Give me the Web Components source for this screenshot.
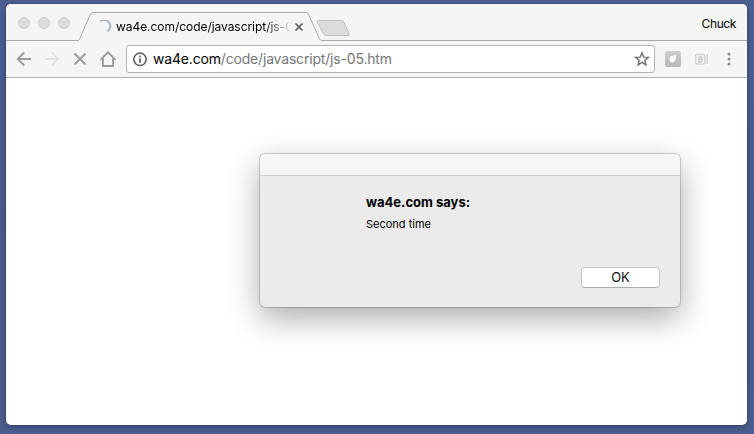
<!DOCTYPE html>
<html lang="en">
<head>
<meta charset="utf-8">
<title>wa4e.com/code/javascript/js-05.htm</title>
<style>
html,body{margin:0;width:754px;height:434px;overflow:hidden}
body{background:linear-gradient(#4c6093,#4b5b8e 50%,#4c5d8f);font-family:Inter,"Liberation Sans",sans-serif;color:#000}
</style>
</head>
<body>
<browser-window>
  <tab-strip slot="tabs" user="Chuck"><browser-tab>wa4e.com/code/javascript/js-05.htm</browser-tab></tab-strip>
  <tool-bar slot="tools"><address-box host="wa4e.com">/code/javascript/js-05.htm</address-box></tool-bar>
  <alert-dialog><span slot="title">wa4e.com says:</span><span slot="message">Second time</span><push-button slot="action">OK</push-button></alert-dialog>
</browser-window>
<script>
function define(name, html) {
  customElements.define(name, class extends HTMLElement {
    constructor() {
      super();
      const t = document.createElement('template');
      t.innerHTML = html;
      this.attachShadow({mode: 'open'}).append(t.content.cloneNode(true));
    }
    connectedCallback() {
      this.shadowRoot.querySelectorAll('[data-attr]').forEach(e => {
        e.textContent = this.getAttribute(e.dataset.attr);
      });
    }
  });
}
define('browser-window', `<style>
:host{display:block;box-sizing:border-box;width:754px;height:434px;padding:4px 7px 9px 6px}
.frame{display:flex;flex-direction:column;height:421px;background:#fff;border-radius:5px;overflow:hidden;box-shadow:0 0 1px 1px #00000018,0 2px 7px #0004}
.page{flex:1;padding:76px 0 0 254px}
</style><div class="frame"><slot name="tabs"></slot><slot name="tools"></slot><div class="page"><slot></slot></div></div>`);
define('tab-strip', `<style>
:host{display:flex;height:37px;background:linear-gradient(#a9a9a9,#a9a9a9) 0 36px/100% 1px no-repeat #f5f5f5}
.lights{display:flex;gap:8px;padding:13px 0 0 12px;width:60px}
.lights i{width:12px;height:12px;box-sizing:border-box;border-radius:50%;background:#dcdcdc;border:1px solid #cfcfcf}
.new{width:36px;height:37px;margin-left:-7px}
.user{margin-left:auto;padding:12px 11px 0 0;font-size:12px;line-height:15px;letter-spacing:-.4px}
</style><div class="lights"><i></i><i></i><i></i></div><slot></slot>
<svg class="new" viewBox="0 0 36 37"><path d="M4 16.500H26Q28 16.500 28.800 18L34 29.500Q35 31.500 33 31.500H11.500Q9.500 31.500 8.700 30L2.500 18.500Q1.500 16.500 4 16.500Z" fill="#dcdcdc" stroke="#bdbdbd"/></svg>
<div class="user" data-attr="user"></div>`);
define('browser-tab', `<style>
:host{display:grid;width:244px;height:37px;grid-template:37px/244px}
.shape,.row{grid-area:1/1}
.shape{width:244px;height:37px}
.row{display:flex;padding:13px 0 0 20px}
.spin{width:14px;height:14px;margin:3px 4px 0 0}
.label{width:173px;overflow:hidden;white-space:nowrap;font-size:12px;line-height:20px;letter-spacing:-.05px;-webkit-mask-image:linear-gradient(90deg,#000 148px,transparent 176px)}
.close{width:10px;height:10px;margin:5px 0 0 5px}
</style>
<svg class="shape" viewBox="0 0 244 37"><path d="M0 37V36.500Q1 36 1.500 35L12.500 10Q13.500 8.500 15 8.500H228Q229.500 8.500 230.500 10L241 35Q242 36.500 244 36.500V37Z" fill="#f5f5f5"/><path d="M0 36.500Q.8 36.500 1.300 35.500L12.500 10Q13.200 8.500 15 8.500H228Q229.800 8.500 230.500 10L241.500 35Q242.300 36.500 244 36.500" fill="none" stroke="#a9a9a9"/></svg>
<div class="row"><svg class="spin" viewBox="0 0 14 14"><path d="M2.300 1A6.300 6.300 0 0 1 9.500 11.500" fill="none" stroke="#b0b8cc" stroke-width="2.200"/></svg><div class="label"><slot></slot></div><svg class="close" viewBox="0 0 10 10"><path d="M1.500 1.500l7 7m0-7l-7 7" stroke="#5b5b5b" stroke-width="1.700"/></svg></div>`);
define('tool-bar', `<style>
:host{display:flex;box-sizing:border-box;height:37px;background:#f5f5f5;border-bottom:1px solid #b3b3b3}
svg{fill:none;stroke:#999;stroke-width:1.800;flex:none}
</style>
<svg width="120" height="36"><path d="M25 18H12M18.200 11.500L11.700 18l6.500 6.500"/><path d="M39 18h13M45.800 11.500l6.500 6.500-6.500 6.500" stroke="#e2e2e2"/><path d="M68.500 12.500l11 11m0-11l-11 11"/><path d="M94.500 18.800l7.500-7.500 7.500 7.500M97 17.500V25h10v-7.500"/></svg>
<slot></slot>
<svg width="92" height="36"><defs><linearGradient id="g" x2="0" y2="1"><stop stop-color="#cecece"/><stop offset="1" stop-color="#b8b8b8"/></linearGradient></defs>
<rect x="10" y="10" width="16" height="16" rx="2" fill="url(#g)" stroke="none"/><path d="M20.800 13.500Q22 18 18.800 20.800Q16.500 22.300 15 20.300Q13.800 17.500 15.500 15.200Q18 15.300 20.800 13.500Z" fill="#fff" stroke="none"/>
<rect x="38" y="10" width="16" height="15" fill="#fafafa" stroke="none"/><rect x="40.700" y="13.500" width="9" height="9.500" rx="1" stroke="#d2d2d2" stroke-width="1.600"/><path d="M52.300 13v10M43.800 15.800v5h2q1.400 0 1.400-1.300t-1.400-1.200h-2M43.800 15.800h1.800q1.400 0 1.400 1.200t-1.400 1.300" stroke="#cbcbcb" stroke-width="1.400"/>
<g fill="#8b8b8b" stroke="none"><circle cx="74" cy="13" r="1.500"/><circle cx="74" cy="18" r="1.500"/><circle cx="74" cy="23" r="1.500"/></g></svg>`);
define('address-box', `<style>
:host{display:flex;box-sizing:border-box;width:529px;height:28px;margin-top:4px;flex:none;background:#fff;border:1px solid #b3b3b3;border-radius:3px;color:#777;font-size:14px;line-height:26px;white-space:nowrap}
svg{fill:none;flex:none}.info{width:26px;height:26px}.star{width:18px;height:18px;margin:4px 3px 0 auto}
b{font-weight:400;color:#000}
.url{letter-spacing:-.18px}
</style>
<svg class="info" viewBox="0 0 26 26"><circle cx="13" cy="13.300" r="6.200" stroke="#5a5a5a" stroke-width="1.500"/><path d="M13 12.300v4.500M13 9.500v1.700" stroke="#5a5a5a" stroke-width="1.700"/></svg>
<div class="url"><b data-attr="host"></b><slot></slot></div>
<svg class="star" viewBox="0 0 18 18"><path d="M9 2.800l1.700 4.300 4.700.3-3.600 3 1.200 4.500-4-2.500-4 2.500 1.200-4.500-3.600-3 4.700-.3z" stroke="#707070" stroke-width="1.400"/></svg>`);
define('alert-dialog', `<style>
:host{display:flex;flex-direction:column;width:420px;height:153px;background:#ebebeb;border-radius:5px;box-shadow:0 0 0 1px #00000020,0 0 2px #0003,0 11px 32px #00000055}
.bar{height:21px;background:#f6f6f6;border-bottom:1px solid #cecece;border-radius:5px 5px 0 0}
.body{flex:1;display:flex;flex-direction:column;padding:18px 20px 0 106px}
.title{font-size:13px;line-height:16px;font-weight:700}
.msg{font-size:11px;line-height:14px;margin-top:7px}
.actions{display:flex;justify-content:flex-end;margin-top:36px}
</style><div class="bar"></div><div class="body"><div class="title"><slot name="title"></slot></div><div class="msg"><slot name="message"></slot></div><div class="actions"><slot name="action"></slot></div></div>`);
define('push-button', `<style>
:host{display:block;box-sizing:border-box;width:79px;height:21px;border:1px solid #c6c6c6;border-bottom-color:#adadad;border-radius:4px;background:#fff;text-align:center;font-size:13px;line-height:18px;color:#111}
</style><slot></slot>`);
</script>
</body>
</html>
